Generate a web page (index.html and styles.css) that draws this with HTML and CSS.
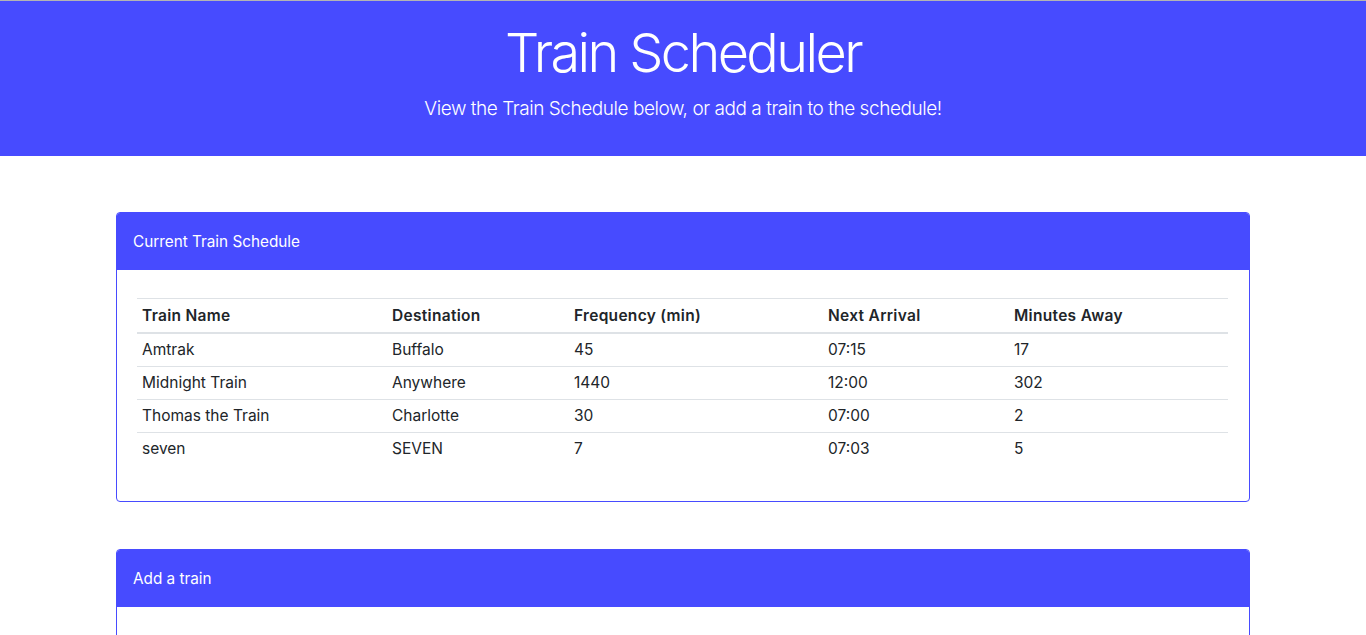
FILE: index.html
```html
<!DOCTYPE html>
<html lang="en">
<head>
<meta charset="utf-8">
<title>Train Scheduler</title>
<link rel="stylesheet" href="styles.css">
</head>
<body>
<header class="jumbotron">
  <h1 class="title">Train Scheduler</h1>
  <p class="lead">View the Train Schedule below, or add a train to the schedule!</p>
</header>
<main class="container">
  <section class="card">
    <div class="card-header">Current Train Schedule</div>
    <div class="card-body">
      <table class="schedule">
        <colgroup>
          <col class="c1"><col class="c2"><col class="c3"><col class="c4"><col class="c5">
        </colgroup>
        <thead>
          <tr><th>Train Name</th><th>Destination</th><th>Frequency (min)</th><th>Next Arrival</th><th>Minutes Away</th></tr>
        </thead>
        <tbody>
          <tr><td>Amtrak</td><td>Buffalo</td><td>45</td><td>07:15</td><td>17</td></tr>
          <tr><td>Midnight Train</td><td>Anywhere</td><td>1440</td><td>12:00</td><td>302</td></tr>
          <tr><td>Thomas the Train</td><td>Charlotte</td><td>30</td><td>07:00</td><td>2</td></tr>
          <tr><td>seven</td><td>SEVEN</td><td>7</td><td>07:03</td><td>5</td></tr>
        </tbody>
      </table>
    </div>
  </section>
  <section class="card">
    <div class="card-header">Add a train</div>
    <div class="card-body add-body"></div>
  </section>
</main>
</body>
</html>
```

FILE: styles.css
```css
html, body {
  margin: 0;
  padding: 0;
}
body {
  font-family: Inter, "Noto Sans", "Liberation Sans", sans-serif;
  font-size: 16px;
  line-height: 1.5;
  color: #212529;
  background: #fff;
  border-top: 1px solid #b4b4b4;
}
.jumbotron {
  background: #474bff;
  color: #fff;
  text-align: center;
  height: 155px;
  box-sizing: border-box;
  padding-top: 19px;
}
.title {
  margin: 0;
  font-size: 54px;
  font-weight: 300;
  line-height: 66px;
  letter-spacing: -2.6px;
}
.lead {
  margin: 8px 0 0;
  font-size: 19px;
  font-weight: 300;
  line-height: 30px;
  letter-spacing: -0.45px;
}
.container {
  width: 1134px;
  margin: 0 auto;
  padding-top: 56px;
  display: flex;
  flex-direction: column;
  gap: 47px;
}
.card {
  border: 1px solid #474bff;
  border-radius: 4px;
  overflow: hidden;
}
.card-header {
  background: #474bff;
  color: #fff;
  height: 57px;
  box-sizing: border-box;
  padding: 16px 16px;
  font-size: 15.3px;
  line-height: 25px;
}
.card-body {
  padding: 28px 20px 36px 20px;
}
.add-body {
  height: 60px;
}
.schedule {
  width: 1091px;
  border-collapse: collapse;
  font-size: 15.5px;
}
.c1 { width: 250px; }
.c2 { width: 182px; }
.c3 { width: 254px; }
.c4 { width: 186px; }
.schedule th, .schedule td {
  text-align: left;
  padding: 4px 5px;
  line-height: 24px;
  border-top: 1px solid #dee2e6;
}
.schedule th {
  font-weight: 600;
  letter-spacing: 0.3px;
  border-bottom: 2px solid #dee2e6;
  padding-top: 5px;
}
.schedule tbody tr:first-child td {
  border-top: none;
}
```
